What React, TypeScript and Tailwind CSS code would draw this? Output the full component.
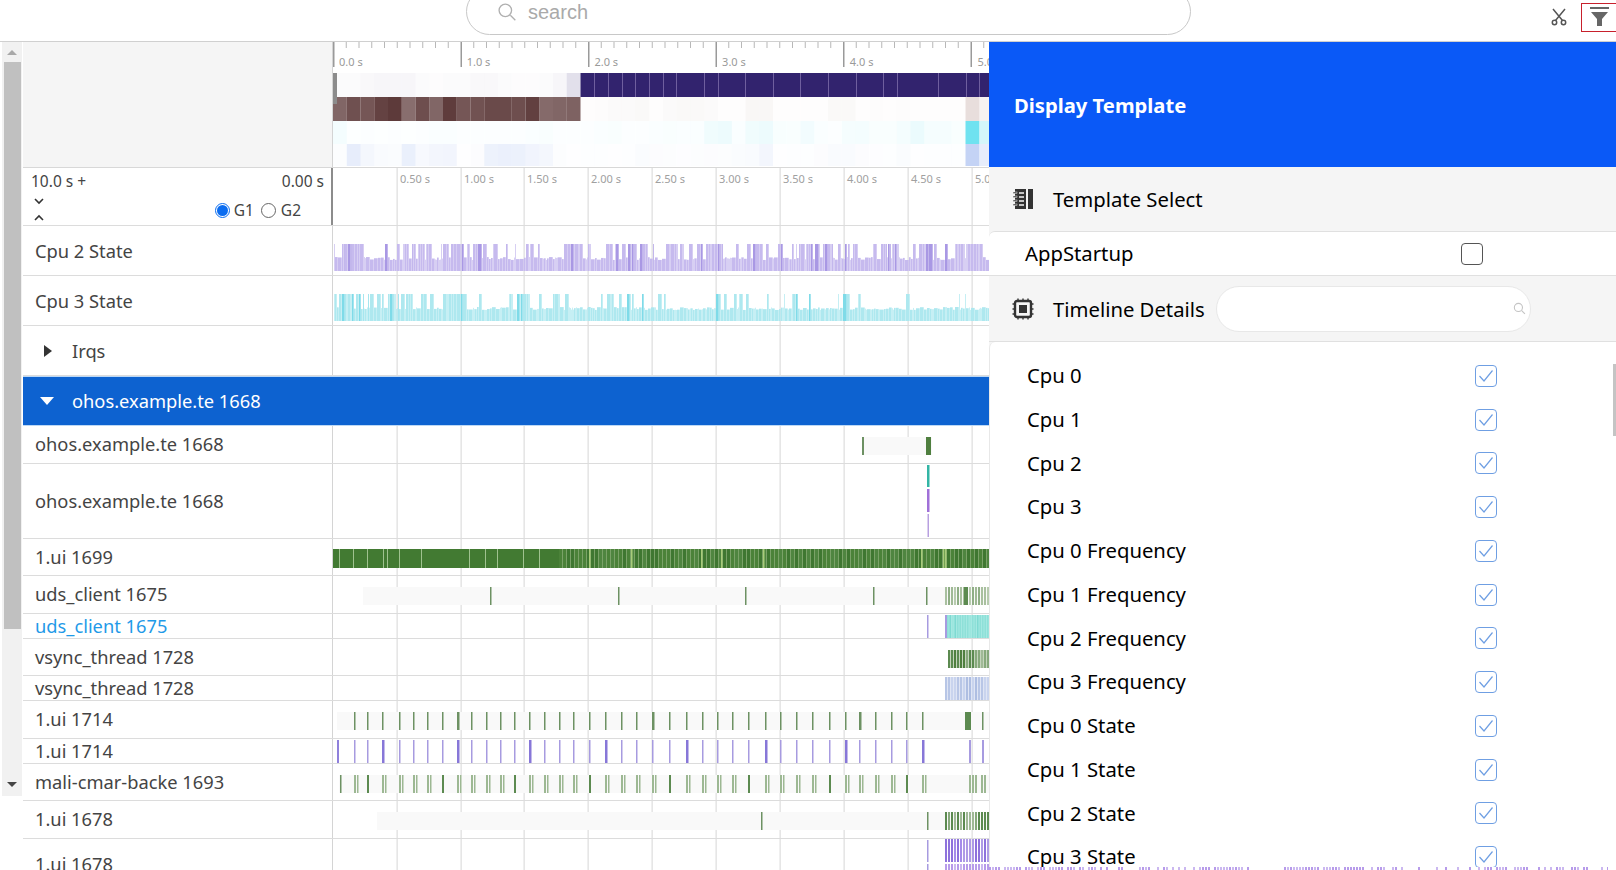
import type { ReactNode } from 'react'

const TRACK_W = 656
const GRID = [64, 128, 191, 255, 319, 383, 447, 511, 575, 639]
const TICKS = [21, 34, 49, 66, 80, 94, 109, 124, 138, 153, 167, 181, 196, 211, 226, 240, 256, 272, 288, 303, 319, 336, 353, 369, 384, 399, 415, 432, 447, 463, 479, 496, 512, 526, 542, 558, 573, 589]

function random(seed: number) {
  let s = seed
  return () => {
    s = (s * 16807) % 2147483647
    return s / 2147483647
  }
}

function Grid({ height }: { height: number }) {
  return (
    <>
      {GRID.map((x) => (
        <rect key={x} x={x - 0.6} y={0} width={1.5} height={height} fill="#e4e4e4" />
      ))}
    </>
  )
}

function StateBars({ seed, color, dark, top, bottom, low, calmFrom = TRACK_W }: { seed: number; color: string; dark: string; top: number; bottom: number; low: number; calmFrom?: number }) {
  const r = random(seed)
  const bars: ReactNode[] = []
  let x = 1
  let busy = true
  let left = 30
  while (x < TRACK_W) {
    if (left <= 0) {
      busy = !busy
      left = 10 + r() * 30
    }
    const w = 1 + Math.floor(r() * 3.5)
    const chance = x > calmFrom ? (busy ? 0.3 : 0.05) : busy ? 0.78 : 0.22
    const tall = r() < chance
    const h = tall ? bottom - top : low + r() * 3
    bars.push(<rect key={x} x={x} y={bottom - h} width={w - 0.3} height={h} fill={tall && r() < 0.2 ? dark : color} />)
    x += w
    left -= w
  }
  return <>{bars}</>
}

function Stripes({ x, width, y, height, colors, step = 3, seed = 7 }: { x: number; width: number; y: number; height: number; colors: string[]; step?: number; seed?: number }) {
  const r = random(seed)
  const out: ReactNode[] = []
  for (let p = x; p < x + width; p += step) {
    out.push(<rect key={p} x={p} y={y} width={Math.min(step - 1, x + width - p)} height={height} fill={colors[Math.floor(r() * colors.length)]} />)
  }
  return <>{out}</>
}

function Row({ label, height, rowClass, color = 'text-[#444]', children }: { label: string; height: number; rowClass: string; color?: string; children?: ReactNode }) {
  return (
    <div className={`flex shrink-0 border-b border-[#dcdcdc] ${rowClass}`}>
      <div className={`w-[310px] shrink-0 border-r border-[#d4d4d4] pl-[12px] flex items-center text-[18.3px] whitespace-nowrap ${color} ${height === 38 ? 'pb-[2px]' : ''}`}>{label}</div>
      <svg width={TRACK_W} height={height - 1} className="shrink-0">
        <Grid height={height} />
        {children}
      </svg>
    </div>
  )
}

function Tick({ x, y, h, fill = '#6d9163', w = 1.5 }: { x: number; y: number; h: number; fill?: string; w?: number }) {
  return <rect x={x} y={y} width={w} height={h} fill={fill} />
}

function Overview() {
  const cell = 13.75
  const purple = [0.02, 0.02, 0.03, 0.04, 0.04, 0.04, 0.02, 0.01, 0.02, 0.02, 0.03, 0.03, 0.02, 0.01, 0.01, 0.02, 0.04, 0.14]
  const brown = [0.76, 0.87, 0.84, 0.94, 0.98, 0.72, 0.88, 0.76, 0.97, 0.84, 0.86, 0.9, 0.9, 0.88, 0.95, 0.74, 0.76, 0.78]
  const brownLight = [0.01, 0.02, 0.03, 0.03, 0.04, 0.01, 0.03, 0.04, 0.04, 0.03, 0.01, 0.01, 0.05, 0.05, 0.01, 0.01, 0.01, 0.01, 0.04, 0.04, 0.01, 0.02, 0.01, 0.02, 0.01, 0.01, 0.01, 0.01, 0.2, 0.08]
  const cyan = [0.08, 0.01, 0.02, 0.01, 0.02, 0.01, 0.02, 0.03, 0.03, 0.02, 0.02, 0.02, 0.02, 0.02, 0.03, 0.04, 0.02, 0.02, 0.02, 0.03, 0.04, 0.02, 0.02, 0.03, 0.04, 0.03, 0.03, 0.1, 0.12, 0.03, 0.1, 0.12, 0.05, 0.04, 0.09, 0.03, 0.02, 0.07, 0.08, 0.04, 0.04, 0.08, 0.14, 0.07, 0.07, 0.04, 1, 0.3]
  const blue = [0.05, 0.4, 0.18, 0.1, 0.08, 0.35, 0.14, 0.2, 0.22, 0.02, 0.06, 0.3, 0.34, 0.32, 0.24, 0.18, 0.05, 0.02, 0.03, 0.03, 0.02, 0.03, 0.08, 0.06, 0.05, 0.04, 0.05, 0.06, 0.05, 0.08, 0.1, 0.2, 0.02, 0.03, 0.03, 0.06, 0.1, 0.1, 0.06, 0.04, 0.03, 0.08, 0.02, 0.03, 0.03, 0.03, 1, 0.4]
  const ticks: number[] = []
  for (let i = 0; i < 55; i++) ticks.push(i * 12.75)
  return (
    <svg width={TRACK_W} height={125} className="shrink-0">
      {ticks.map((x, i) => (
        <rect key={x} x={x} y={0} width={i % 10 === 0 ? 1.5 : 1} height={i % 10 === 0 ? 25 : 6} fill={i % 10 === 0 ? '#9a9a9a' : '#b8b8b8'} />
      ))}
      {['0.0 s', '1.0 s', '2.0 s', '3.0 s', '4.0 s', '5.0 s'].map((t, i) => (
        <text key={t} x={6 + i * 127.7} y={24} fontSize={11} fill="#9a9a9a">{t}</text>
      ))}
      {purple.map((o, i) => (
        <rect key={i} x={i * cell} y={31} width={cell} height={24} fill="#32236e" opacity={o} />
      ))}
      <rect x={247.5} y={31} width={409} height={24} fill="#32236e" />
      {[261, 275, 289, 302, 316, 330, 343, 371, 385, 412, 440, 467, 495, 523, 550, 564, 605, 633, 646].map((x) => (
        <rect key={x} x={x} y={31} width={1} height={24} fill="#6f5f9e" />
      ))}
      {brown.map((o, i) => (
        <rect key={i} x={i * cell} y={55} width={cell} height={24} fill="#5a3636" opacity={o} />
      ))}
      {brownLight.map((o, i) => (
        <rect key={i} x={247.5 + i * cell} y={55} width={cell} height={24} fill="#8a5a50" opacity={o} />
      ))}
      {cyan.map((o, i) => (
        <rect key={i} x={i * cell} y={79} width={cell} height={23} fill="#6fe2f0" opacity={o} />
      ))}
      {blue.map((o, i) => (
        <rect key={i} x={i * cell} y={102} width={cell} height={22} fill="#c4d3f5" opacity={o} />
      ))}
      <rect x={0} y={31} width={4} height={31} fill="#8c8c8c" />
    </svg>
  )
}

const GREEN = ['#a9c09f', '#b7cbae', '#8fae85', '#a0b996']

function NotebookIcon() {
  return (
    <svg width="22" height="22" viewBox="0 0 22 22" fill="#333">
      <path d="M3 1h11v20H3z" />
      <rect x="16" y="1" width="5" height="20" />
      <rect x="1" y="4" width="4" height="1.5" stroke="#f5f5f5" strokeWidth="0.5" />
      <rect x="1" y="8" width="4" height="1.5" stroke="#f5f5f5" strokeWidth="0.5" />
      <rect x="1" y="12" width="4" height="1.5" stroke="#f5f5f5" strokeWidth="0.5" />
      <rect x="1" y="16" width="4" height="1.5" stroke="#f5f5f5" strokeWidth="0.5" />
      <path d="M7 5h5M7 9h5M7 13h5M7 17h5" stroke="#f5f5f5" strokeWidth="1.4" />
    </svg>
  )
}

function ChipIcon() {
  return (
    <svg width="22" height="22" viewBox="0 0 22 22" fill="none" stroke="#333">
      <rect x="3" y="3" width="16" height="16" rx="2" strokeWidth="2.4" />
      <rect x="7" y="7" width="8" height="8" fill="#333" strokeWidth="0" />
      <path d="M6 0.5v2M11 0.5v2M16 0.5v2M6 19.5v2M11 19.5v2M16 19.5v2M0.5 6h2M0.5 11h2M0.5 16h2M19.5 6h2M19.5 11h2M19.5 16h2" strokeWidth="1.4" />
    </svg>
  )
}

function Check() {
  return (
    <div className="w-[22px] h-[22px] rounded-[4px] border border-[#6f9fe3] bg-white flex items-center justify-center shrink-0">
      <svg width="16" height="14" viewBox="0 0 16 14" fill="none" stroke="#6f9fe3" strokeWidth="1.2">
        <path d="M1.5 7l4.5 5L14.5 1.5" />
      </svg>
    </div>
  )
}

const DETAILS = ['Cpu 0', 'Cpu 1', 'Cpu 2', 'Cpu 3', 'Cpu 0 Frequency', 'Cpu 1 Frequency', 'Cpu 2 Frequency', 'Cpu 3 Frequency', 'Cpu 0 State', 'Cpu 1 State', 'Cpu 2 State', 'Cpu 3 State']

function DisplayPanel() {
  return (
    <div className="flex-1 min-w-0 flex flex-col bg-[#f5f5f5] h-[828px]">
      <div className="h-[125px] shrink-0 bg-[#0a59f7] flex items-center pl-[25px] pt-[1px] text-white font-bold text-[20.2px]">Display Template</div>
      <div className="h-[64px] shrink-0 flex items-center pl-[23px] gap-[19px] text-[20.3px] text-black">
        <NotebookIcon />
        <span>Template Select</span>
      </div>
      <div className="h-[45px] shrink-0 bg-white border-y border-[#e0e0e0] rounded-tl-md flex items-center pl-[36px] text-[20.3px] text-black">
        <span className="w-[436px]">AppStartup</span>
        <div className="w-[22px] h-[22px] rounded-[4px] border border-[#555] bg-white" />
      </div>
      <div className="h-[66px] shrink-0 flex items-center pl-[23px] text-[20.3px] text-black border-b border-[#e0e0e0]">
        <ChipIcon />
        <span className="ml-[19px] pt-[2px] whitespace-nowrap">Timeline Details</span>
        <div className="ml-[11px] w-[315px] h-[46px] rounded-[23px] bg-white border border-[#e8e8e8] flex items-center justify-end pr-[4px]">
          <svg width="13" height="13" viewBox="0 0 24 24" fill="none" stroke="#c4c4c4" strokeWidth="2">
            <circle cx="10" cy="10" r="7.5" />
            <path d="M16 16l6 6" />
          </svg>
        </div>
      </div>
      <div className="flex-1 min-h-0 flex bg-white border-l border-[#e8e8e8] rounded-tl-md overflow-hidden">
        <div className="flex-1 overflow-hidden pt-[12px]">
          {DETAILS.map((d) => (
            <div key={d} className="h-[43.75px] flex items-center pl-[37px] text-[20.3px] text-black shrink-0">
              <span className="w-[448px] -mt-[1px]">{d}</span>
              <Check />
            </div>
          ))}
        </div>
        <div className="w-[3px] shrink-0">
          <div className="mt-[22px] h-[72px] bg-[#c4c4c4]" />
        </div>
      </div>
      <svg width={627} height={3} className="shrink-0 bg-white">
        <Stripes x={0} width={263} y={0} height={3} colors={['#b79bea', '#cbb8f0', '#ffffff']} seed={11} />
        <Stripes x={295} width={122} y={0} height={3} colors={['#b79bea', '#cbb8f0', '#ffffff']} seed={12} />
        <Stripes x={429} width={190} y={0} height={3} colors={['#b79bea', '#cbb8f0', '#ffffff']} seed={13} />
      </svg>
    </div>
  )
}

export default function App() {
  return (
    <div className="w-[1616px] h-[870px] overflow-hidden bg-white flex flex-col font-['Noto_Sans',sans-serif]">
      <div className="h-[42px] shrink-0 border-b border-[#d0d0d0] flex items-start overflow-hidden">
        <div className="ml-[466px] -mt-[12px] w-[725px] h-[47px] rounded-[24px] border border-[#c8c8c8] flex items-center pl-[30px] shrink-0">
          <svg width="20" height="20" viewBox="0 0 24 24" fill="none" stroke="#b0b0b0" strokeWidth="1.6">
            <circle cx="10" cy="10" r="7.5" />
            <path d="M16 16l6 6" />
          </svg>
          <span className="ml-[11px] text-[20px] text-[#aaa] font-['Liberation_Sans',sans-serif]">search</span>
        </div>
        <svg width="16" height="18" viewBox="0 0 16 18" fill="none" stroke="#555" strokeWidth="1.5" className="ml-[360px] mt-[8px] shrink-0">
          <path d="M2 1l9.5 11.5M14 1L4.5 12.5" />
          <circle cx="3.5" cy="14.5" r="2.2" />
          <circle cx="12.5" cy="14.5" r="2.2" />
        </svg>
        <div className="ml-[14px] mt-[3px] w-[40px] h-[29px] border border-[#c8202c] shrink-0 pl-[8px] pt-[3px]">
          <svg width="19" height="20" viewBox="0 0 19 20" fill="#666">
            <rect x="0" y="0" width="19" height="2" />
            <path d="M1 5h17l-6 7v7h-5v-7z" />
          </svg>
        </div>
      </div>

      <div className="flex-1 min-h-0 flex">
        <div className="w-[23px] shrink-0 flex flex-col items-center pl-[2px] pr-[1px]">
          <div className="h-[754px] w-full bg-[#f1f1f1] flex flex-col items-center">
            <div className="h-[20px] shrink-0 flex items-center">
              <div className="w-0 h-0 border-x-[5px] border-x-transparent border-b-[5px] border-b-[#a8a8a8]" />
            </div>
            <div className="h-[567px] w-[17px] shrink-0 bg-[#c0c0c0]" />
            <div className="flex-1" />
            <div className="h-[24px] shrink-0 flex items-center">
              <div className="w-0 h-0 border-x-[5px] border-x-transparent border-t-[5px] border-t-[#444]" />
            </div>
          </div>
        </div>

        <div className="w-[966px] shrink-0 flex flex-col overflow-hidden">
          <div className="flex shrink-0 border-b border-[#d8d8d8] h-[126px]">
            <div className="w-[310px] shrink-0 bg-[#f5f5f5] border-r border-[#d4d4d4]" />
            <Overview />
          </div>

          <div className="flex shrink-0 border-b border-[#dcdcdc] h-[58px]">
            <div className="w-[310px] shrink-0 border-r-2 border-[#8c8c8c] pl-[8px] pr-[7px] pt-[2px] text-[#444]">
              <div className="flex justify-between text-[15.5px]">
                <span>10.0 s +</span>
                <span>0.00 s</span>
              </div>
              <div className="flex items-start justify-between pl-[3px]">
                <div className="flex flex-col gap-[9px] pt-[5px]">
                  <svg width="10" height="7" viewBox="0 0 10 7" fill="none" stroke="#333" strokeWidth="1.6"><path d="M1 1l4 4 4-4" /></svg>
                  <svg width="10" height="7" viewBox="0 0 10 7" fill="none" stroke="#333" strokeWidth="1.6"><path d="M1 6l4-4 4 4" /></svg>
                </div>
                <div className="flex items-center text-[15.5px] pr-[23px] pt-[6px]">
                  <div className="w-[15px] h-[15px] rounded-full border border-[#0a6cf0] flex items-center justify-center mr-[4px]">
                    <div className="w-[11px] h-[11px] rounded-full bg-[#0a6cf0]" />
                  </div>
                  <span>G1</span>
                  <div className="w-[15px] h-[15px] rounded-full border border-[#666] ml-[7px] mr-[5px]" />
                  <span>G2</span>
                </div>
              </div>
            </div>
            <svg width={TRACK_W} height={57} className="shrink-0">
              <Grid height={57} />
              {['0.50 s', '1.00 s', '1.50 s', '2.00 s', '2.50 s', '3.00 s', '3.50 s', '4.00 s', '4.50 s', '5.00 s'].map((t, i) => (
                <text key={t} x={GRID[i] + 3} y={15} fontSize={11} fill="#a0a0a0">{t}</text>
              ))}
            </svg>
          </div>

          <Row label="Cpu 2 State" height={50} rowClass="h-[50px]">
            <StateBars seed={41} color="#c6baee" dark="#a998e4" top={18} bottom={45} low={11} />
          </Row>
          <Row label="Cpu 3 State" height={50} rowClass="h-[50px]">
            <StateBars seed={97} color="#aee8ef" dark="#7fdbe8" top={18} bottom={45} low={11} calmFrom={225} />
          </Row>

          <div className="flex shrink-0 border-b border-[#dcdcdc] h-[50px]">
            <div className="w-[310px] shrink-0 border-r border-[#d4d4d4] pl-[21px] flex items-center text-[18.3px] text-[#444]">
              <div className="w-0 h-0 border-y-[6px] border-y-transparent border-l-[8px] border-l-[#333] mr-[20px]" />
              Irqs
            </div>
            <svg width={TRACK_W} height={49} className="shrink-0"><Grid height={49} /></svg>
          </div>

          <div className="h-[50px] shrink-0 bg-[#0d62d0] border-y border-[#bcd8f5] flex items-center pl-[17px] text-[18.3px] text-white">
            <div className="w-0 h-0 border-x-[7px] border-x-transparent border-t-[8px] border-t-white mr-[18px]" />
            ohos.example.te 1668
          </div>

          <Row label="ohos.example.te 1668" height={38} rowClass="h-[38px]">
            <rect x={529} y={11} width={70} height={18} fill="#f9f9f9" />
            <Tick x={529} y={11} h={18} w={2} />
            <rect x={593} y={11} width={5} height={18} fill="#4f7f3f" />
          </Row>
          <Row label="ohos.example.te 1668" height={75} rowClass="h-[75px]">
            <rect x={594} y={1} width={2.5} height={22} fill="#33b5a5" />
            <rect x={594} y={25} width={2.5} height={23} fill="#a070d8" />
            <rect x={594.5} y={50} width={1.5} height={23} fill="#b8a0e0" />
          </Row>
          <Row label="1.ui 1699" height={37} rowClass="h-[37px]">
            <rect x={0} y={10} width={226} height={19} fill="#427a32" />
            <rect x={226} y={10} width={430} height={19} fill="#7aa268" />
            {[6, 20, 34, 50, 54, 66, 88, 136, 152, 164, 190, 206].map((x) => (
              <rect key={x} x={x} y={10} width={1} height={19} fill="#9fc28f" />
            ))}
            <Stripes x={226} width={430} y={10} height={19} colors={['#4b8239', '#3f7731', '#4f8540']} step={4} seed={23} />
            {[256, 298, 368, 388, 430, 588, 610, 612].map((x) => (
              <rect key={x} x={x} y={10} width={1.5} height={19} fill="#a8cc7a" />
            ))}
          </Row>
          <Row label="uds_client 1675" height={38} rowClass="h-[38px]">
            <rect x={30} y={11} width={626} height={18} fill="#f9f9f9" />
            {[157, 285, 412, 540, 593].map((x) => (
              <Tick key={x} x={x} y={11} h={18} />
            ))}
            <Stripes x={612} width={44} y={11} height={18} colors={GREEN} seed={5} />
            <rect x={631} y={11} width={4} height={18} fill="#5c8a50" />
          </Row>
          <Row label="uds_client 1675" height={25} rowClass="h-[25px]" color="text-[#1f9ae8]">
            <rect x={594} y={1} width={1.5} height={23} fill="#a79be0" />
            <rect x={612} y={1} width={2} height={23} fill="#a79be0" />
            <rect x={614} y={1} width={42} height={23} fill="#a5e8e2" />
            <Stripes x={614} width={42} y={1} height={23} colors={['#8ee0d8', '#9ce6de', '#7fdad2']} step={2.5} seed={6} />
          </Row>
          <Row label="vsync_thread 1728" height={37} rowClass="h-[37px]">
            <rect x={615} y={11} width={41} height={18} fill="#c4d4bc" />
            <Stripes x={615} width={41} y={11} height={18} colors={['#5c8a50', '#87a97c', '#a0b996', '#4f7f3f']} seed={9} />
          </Row>
          <Row label="vsync_thread 1728" height={25} rowClass="h-[25px]">
            <rect x={612} y={1} width={44} height={23} fill="#dfe5f4" />
            <Stripes x={612} width={44} y={1} height={23} colors={['#b8c6e6', '#c9d4ee', '#aebee2']} seed={10} />
          </Row>
          <Row label="1.ui 1714" height={38} rowClass="h-[38px]">
            <rect x={4} y={11} width={652} height={18} fill="#f9f9f9" />
            {TICKS.map((x, i) => (
              <Tick key={x} x={x} y={11} h={18} w={i % 13 === 7 ? 2.5 : 1.5} />
            ))}
            <rect x={632} y={11} width={6} height={18} fill="#5c8a50" />
            <Tick x={649} y={11} h={18} />
          </Row>
          <Row label="1.ui 1714" height={25} rowClass="h-[25px]">
            <Tick x={4} y={1} h={23} fill="#8f80dc" w={2} />
            {TICKS.map((x, i) => (
              <Tick key={x} x={x} y={1} h={23} fill={i % 5 === 2 ? '#8777d8' : '#a79be0'} w={i % 5 === 2 ? 2.5 : 1.5} />
            ))}
            <Tick x={636} y={1} h={23} fill="#a79be0" w={2} />
            <Tick x={649} y={1} h={23} fill="#a79be0" w={2} />
          </Row>
          <Row label="mali-cmar-backe 1693" height={37} rowClass="h-[37px]">
            <rect x={6} y={11} width={650} height={18} fill="#f9f9f9" />
            <Tick x={7} y={11} h={18} />
            {TICKS.map((x, i) => (
              <g key={x}>
                <Tick x={x} y={11} h={18} fill={i % 5 === 1 ? '#5c8a50' : '#9db893'} w={2} />
                {i % 5 !== 1 && <Tick x={x + 3} y={11} h={18} fill="#9db893" w={1.5} />}
              </g>
            ))}
            <Stripes x={636} width={8} y={11} height={18} colors={['#9db893']} seed={3} />
            <Stripes x={648} width={5} y={11} height={18} colors={['#9db893']} seed={3} />
          </Row>
          <Row label="1.ui 1678" height={38} rowClass="h-[38px]">
            <rect x={44} y={11} width={612} height={18} fill="#f9f9f9" />
            <Tick x={428} y={11} h={18} />
            <Tick x={594} y={11} h={18} />
            <Stripes x={612} width={44} y={11} height={18} colors={['#5c8a50', '#87a97c', '#a0b996']} seed={4} />
          </Row>
          <Row label="1.ui 1678" height={50} rowClass="h-[50px]">
            <Tick x={594} y={1} h={22} fill="#a79be0" />
            <Tick x={594} y={25} h={10} fill="#a79be0" />
            <Stripes x={612} width={44} y={0} height={23} colors={['#8e72dc', '#ae9be6', '#a58cea']} seed={8} />
            <Stripes x={612} width={44} y={25} height={10} colors={['#b79bea', '#cbb8f0']} seed={8} />
          </Row>
        </div>

        <DisplayPanel />
      </div>
    </div>
  )
}
